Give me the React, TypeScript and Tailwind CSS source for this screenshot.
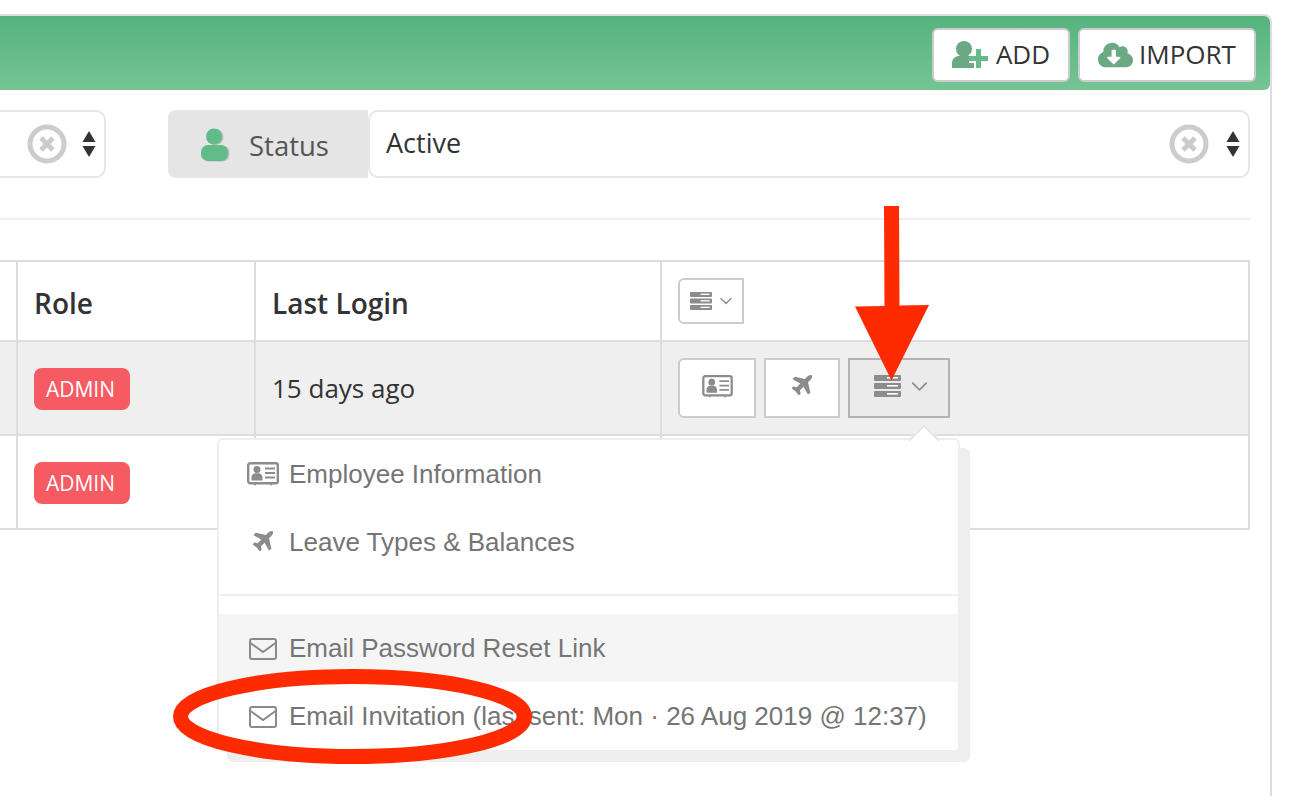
import { FaCloudDownloadAlt } from "react-icons/fa";
import { ChevronDown } from "lucide-react";

const OPEN = "font-['Open_Sans',sans-serif]";

function Plane({ className }: { className: string }) {
  return (
    <svg viewBox="0 0 1792 1792" className={className} aria-hidden="true">
      <path
        fill="#8c8c8c"
        d="M1568 160q44 52 12 148t-108 172l-161 161 160 696q5 19-12 33l-128 96q-7 6-19 6-4 0-7-1-15-3-21-16l-279-508-259 259 53 194q5 17-8 31l-96 96q-9 9-23 9h-2q-15-2-24-13l-189-252-252-189q-11-7-13-23-1-13 9-25l96-97q9-9 23-9 6 0 8 1l194 53 259-259-508-279q-14-8-17-24-2-16 9-27l128-128q14-13 30-8l665 159 160-160q76-76 172-108t148 12z"
      />
    </svg>
  );
}

function UserPlus() {
  return (
    <svg viewBox="0 0 36 27" className="w-[36px] h-[27px]" aria-hidden="true">
      <circle cx="12" cy="8" r="8" fill="#6aa984" />
      <path d="M0 27v-5c0-4 3-7 7-7h10c4 0 7 3 7 7v5z" fill="#6aa984" />
      <path d="M26.500 8v19M17 17.500h19" stroke="#fff" strokeWidth="9" />
      <path d="M26.500 8v19M17 17.500h19" stroke="#6bb98b" strokeWidth="5" />
    </svg>
  );
}

function ServerIcon({ className }: { className: string }) {
  return (
    <svg viewBox="0 0 27 22" className={className} aria-hidden="true">
      {[0, 8, 16].map((y) => (
        <g key={y}>
          <rect x="0" y={y} width="27" height="6" rx="1" fill="#8c8c8c" />
          <rect x="13" y={y + 2} width="11" height="1.6" fill="#fff" />
        </g>
      ))}
    </svg>
  );
}

function IdCard({ className }: { className: string }) {
  return (
    <svg viewBox="0 0 32 24" className={className} aria-hidden="true">
      <rect x="1.200" y="1.200" width="29.600" height="20" rx="2" fill="#fff" fillOpacity="0.4" stroke="#8c8c8c" strokeWidth="2.400" />
      <circle cx="10" cy="7.500" r="3.500" fill="#8c8c8c" />
      <path d="M4.500 18.500v-3c0-2.500 1.800-4.200 4-4.200h3c2.200 0 4 1.700 4 4.200v3z" fill="#8c8c8c" />
      <path d="M18 6.500h10M18 11h10M18 15.500h10" stroke="#8c8c8c" strokeWidth="1.800" />
      <path d="M8 21v2.500M24 21v2.500" stroke="#8c8c8c" strokeWidth="1.500" />
    </svg>
  );
}

function Mail() {
  return (
    <svg viewBox="0 0 28 22" className="w-[28px] h-[22px] mt-[2px]" aria-hidden="true">
      <rect x="1" y="1" width="26" height="20" rx="2" fill="none" stroke="#8a8a8a" strokeWidth="2" />
      <path d="M1.500 5l12.500 9 12.500-9" fill="none" stroke="#8a8a8a" strokeWidth="2" />
    </svg>
  );
}

function ClearIcon() {
  return (
    <svg viewBox="0 0 40 40" className="w-[40px] h-[40px]" aria-hidden="true">
      <circle cx="20" cy="20" r="17" fill="none" stroke="#cccccc" strokeWidth="5" />
      <path d="M14 14l12 12M26 14L14 26" stroke="#cccccc" strokeWidth="5" />
    </svg>
  );
}

function SortIcon() {
  return (
    <svg viewBox="0 0 14 26" className="w-[14px] h-[26px]" aria-hidden="true">
      <path d="M7 0l6.500 11H.5z" fill="#333" />
      <path d="M7 26l6.500-11H.5z" fill="#333" />
    </svg>
  );
}

function Person() {
  return (
    <svg viewBox="0 0 30 34" className="w-[30px] h-[34px] mt-[2px]" aria-hidden="true">
      <circle cx="15.500" cy="9" r="8" fill="#bdbdbd" />
      <rect x="2.500" y="17.500" width="27" height="16" rx="7" fill="#bdbdbd" />
      <circle cx="14" cy="8.500" r="8" fill="#62bc87" />
      <rect x="1" y="17" width="27" height="16" rx="7" fill="#62bc87" />
    </svg>
  );
}

function Badge() {
  return (
    <span className="flex items-center justify-center w-[96px] h-[42px] mt-[2px] pr-[3px] pt-[1px] rounded-lg bg-[#f65a62] text-white text-[21px] leading-none">
      ADMIN
    </span>
  );
}

function MenuItem({ icon, label, active }: { icon: React.ReactNode; label: string; active?: boolean }) {
  return (
    <div className={`flex items-center h-[68px] pl-[28px] text-[26px] text-[#757575] font-['Liberation_Sans',sans-serif] whitespace-nowrap ${active ? "bg-[#f5f5f5]" : ""}`}>
      <span className="flex items-center justify-center w-[32px] mr-[10px]">{icon}</span>
      <span>{label}</span>
    </div>
  );
}

export default function App() {
  return (
    <div className={`relative w-[1292px] h-[796px] overflow-hidden bg-white pt-[14px] text-[#333] ${OPEN}`}>
      <div className="w-[1272px] h-[782px] border-t-2 border-r-2 border-[#dddddd] rounded-tr-lg">
        <header className="h-[74px] rounded-tr-md rounded-br-md bg-gradient-to-b from-[#55b37e] to-[#75c594] flex items-center justify-end gap-[8px] pr-[14px] pt-[4px]">
          <button className="flex items-center justify-center w-[138px] h-[54px] pb-[1px] bg-white border-2 border-[#cccccc] rounded-md text-[26px] gap-[8px]">
            <UserPlus />
            ADD
          </button>
          <button className="flex items-center justify-center w-[178px] h-[54px] pb-[1px] bg-white border-2 border-[#cccccc] rounded-md text-[26px] gap-[6px]">
            <FaCloudDownloadAlt className="w-[35px] h-[28px] text-[#6aa984]" />
            IMPORT
          </button>
        </header>

        <div className="w-[1250px] flex items-stretch h-[68px] mt-[20px]">
          <div className="flex items-center justify-end w-[106px] border-2 border-l-0 border-[#e6e6e6] rounded-r-[10px] pr-[8px] gap-[15px]">
            <ClearIcon />
            <SortIcon />
          </div>
          <div className="flex items-center w-[200px] ml-[62px] bg-[#e5e5e5] rounded-l-lg pl-[32px] gap-[19px] text-[27.500px] text-[#555]">
            <Person />
            <span className="pt-[3px]">Status</span>
          </div>
          <div className="flex-1 flex items-center justify-between border-2 border-[#e6e6e6] rounded-[10px] pl-[16px] pr-[8px] text-[27px]">
            <span className="-mt-[2px]">Active</span>
            <span className="flex items-center gap-[17px]">
              <ClearIcon />
              <SortIcon />
            </span>
          </div>
        </div>

        <div className="w-[1250px] h-[2px] bg-[#eeeeee] mt-[40px]" />

        <div className="w-[1250px] mt-[40px] border-t-2 border-r-2 border-[#dddddd]">
          <div className="grid grid-cols-[18px_238px_406px_1fr] h-[80px] border-b-2 border-[#dddddd] text-[28px] font-semibold">
            <div className="border-r-2 border-[#dddddd]" />
            <div className="flex items-center pl-[16px] pt-[4px] border-r-2 border-[#dddddd]">Role</div>
            <div className="flex items-center pl-[16px] pt-[4px] border-r-2 border-[#dddddd]">Last Login</div>
            <div className="flex items-center pl-[16px]">
              <button className="flex items-center justify-start pl-[10px] gap-[4px] w-[66px] h-[46px] border-2 border-[#cccccc] rounded-l-md bg-white">
                <ServerIcon className="w-[22px] h-[18px]" />
                <ChevronDown strokeWidth={1.7} className="w-[20px] h-[20px] text-[#8c8c8c]" />
              </button>
            </div>
          </div>
          <div className="grid grid-cols-[18px_238px_406px_1fr] h-[94px] border-b-2 border-[#dddddd] bg-[#efefef] text-[26px]">
            <div className="border-r-2 border-[#dddddd]" />
            <div className="flex items-center pl-[16px] border-r-2 border-[#dddddd]"><Badge /></div>
            <div className="flex items-center pl-[16px] border-r-2 border-[#dddddd]">15 days ago</div>
            <div className="flex items-center pl-[16px] gap-[8px]">
              <button className="flex items-center justify-center pb-[4px] w-[78px] h-[60px] border-2 border-[#cccccc] rounded-l-md bg-white">
                <IdCard className="w-[31px] h-[23px]" />
              </button>
              <button className="flex items-center justify-center pb-[4px] w-[76px] h-[60px] border-2 border-[#cccccc] bg-white">
                <Plane className="w-[26px] h-[26px]" />
              </button>
              <button className="flex items-center justify-start pl-[24px] pb-[4px] gap-[5px] w-[102px] h-[60px] border-2 border-[#b3b3b3] bg-[#ebebeb]">
                <ServerIcon className="w-[27px] h-[22px]" />
                <ChevronDown strokeWidth={1.5} className="w-[27px] h-[27px] text-[#8c8c8c]" />
              </button>
            </div>
          </div>
          <div className="grid grid-cols-[18px_238px_406px_1fr] h-[94px] border-b-2 border-[#dddddd]">
            <div className="border-r-2 border-[#dddddd]" />
            <div className="flex items-center pl-[16px] border-r-2 border-[#dddddd]"><Badge /></div>
            <div className="border-r-2 border-[#dddddd]" />
            <div />
          </div>
        </div>
      </div>

      {/* dropdown menu over the table */}
      <div className="absolute left-[217px] top-[438px] w-[743px] h-[314px] bg-white border-2 border-[#eeeeee] rounded-md shadow-[10px_10px_0_0_#eeeeee]">
        <div className="absolute -top-[11px] left-[694px] w-[22px] h-[22px] rotate-45 bg-white border-t-2 border-l-2 border-[#e6e6e6]" />
        <div className="relative">
          <MenuItem icon={<IdCard className="w-[32px] h-[24px]" />} label="Employee Information" />
          <MenuItem icon={<Plane className="w-[26px] h-[26px]" />} label="Leave Types & Balances" />
          <div className="h-[2px] bg-[#f0f0f0] mt-[18px] mb-[18px]" />
          <MenuItem icon={<Mail />} label="Email Password Reset Link" active />
          <MenuItem icon={<Mail />} label="Email Invitation (last sent: Mon · 26 Aug 2019 @ 12:37)" />
        </div>
      </div>

      {/* red annotations drawn on the screenshot */}
      <svg className="absolute left-0 top-0 w-[1292px] h-[796px] pointer-events-none" viewBox="0 0 1292 796" aria-hidden="true">
        <path d="M884 206h15l.5 99.500 29.500-.5-37.500 75.500L855 306.500l29.500-.5z" fill="#fe2a00" />
        <ellipse cx="352.500" cy="716.500" rx="172" ry="40" fill="none" stroke="#fe2a00" strokeWidth="15" />
      </svg>
    </div>
  );
}
